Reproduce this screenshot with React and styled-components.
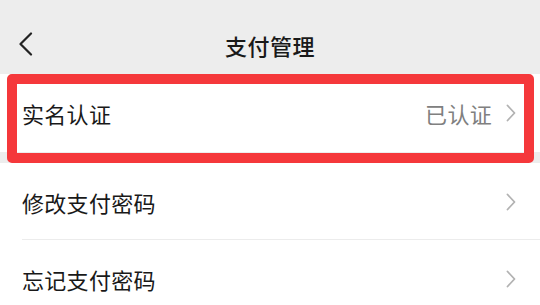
import React from 'react'
import styled, { createGlobalStyle } from 'styled-components'

const Global = createGlobalStyle`
  html, body {
    margin: 0;
    padding: 0;
    background: #fff;
    font-family: "Noto Sans CJK SC", "Noto Sans", sans-serif;
  }
`

const Page = styled.div`
  width: 540px;
  min-height: 305px;
  background: #fff;
  overflow: hidden;
`

const NavBar = styled.div`
  height: 74px;
  box-sizing: border-box;
  padding-top: 16px;
  background: #ededed;
  display: flex;
  align-items: center;
  justify-content: center;
  position: relative;
`

const BackButton = styled.div`
  position: absolute;
  left: 18px;
  top: 32px;
  width: 18px;
  height: 24px;
  display: flex;
  align-items: center;
`

const Title = styled.div`
  font-size: 22px;
  font-weight: 500;
  color: #191919;
  letter-spacing: 0.5px;
`

const Section = styled.div`
  position: relative;
  background: #fff;
`

const Gap = styled.div`
  height: 11px;
  background: #ededed;
`

const Row = styled.div`
  height: ${p => p.h || 77}px;
  box-sizing: border-box;
  padding: 0 24px 0 22px;
  display: flex;
  align-items: center;
  position: relative;
  ${p => p.divider && `
    &::after {
      content: '';
      position: absolute;
      left: 22px;
      right: 0;
      bottom: 0;
      height: 1px;
      background: #ececec;
    }
  `}
`

const Label = styled.span`
  flex: 1;
  font-size: 22px;
  color: #191919;
  letter-spacing: 0.3px;
`

const Value = styled.span`
  font-size: 22px;
  color: #808080;
  margin-right: 14px;
  letter-spacing: 0.3px;
`

const Highlight = styled.div`
  position: absolute;
  left: 7px;
  right: 6px;
  top: 0;
  bottom: -11px;
  border: 10px solid #f5383b;
  border-radius: 5px;
  pointer-events: none;
`

const Chevron = () => (
  <svg width="10" height="18" viewBox="0 0 10 18">
    <path d="M1.5 1.5 L8.5 9 L1.5 16.5" fill="none" stroke="#b2b2b2" strokeWidth="1.8" strokeLinecap="round" strokeLinejoin="round" />
  </svg>
)

const BackIcon = () => (
  <svg width="15" height="24" viewBox="0 0 15 24">
    <path d="M13 1.5 L2.5 12 L13 22.5" fill="none" stroke="#222" strokeWidth="2.2" strokeLinecap="round" strokeLinejoin="round" />
  </svg>
)

export default function App() {
  return (
    <Page>
      <Global />
      <NavBar>
        <BackButton><BackIcon /></BackButton>
        <Title>支付管理</Title>
      </NavBar>
      <Section>
        <Row h={78}>
          <Label>实名认证</Label>
          <Value>已认证</Value>
          <Chevron />
        </Row>
        <Highlight />
      </Section>
      <Gap />
      <Section>
        <Row divider>
          <Label>修改支付密码</Label>
          <Chevron />
        </Row>
        <Row>
          <Label>忘记支付密码</Label>
          <Chevron />
        </Row>
      </Section>
    </Page>
  )
}
